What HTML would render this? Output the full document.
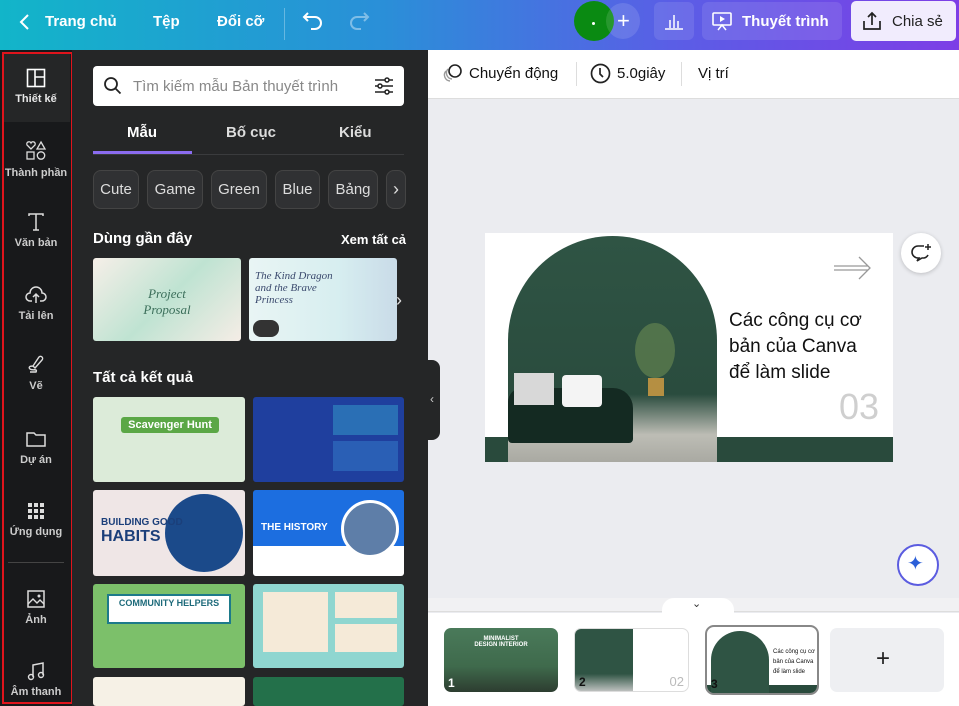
<!DOCTYPE html>
<html><head><meta charset="utf-8">
<style>
*{box-sizing:border-box;margin:0;padding:0}
body{width:959px;height:706px;overflow:hidden;font-family:"Liberation Sans",sans-serif;background:#ebecf0;position:relative}
.abs{position:absolute}
#top{left:0;top:0;width:959px;height:50px;background:linear-gradient(90deg,#12b5c9 0%,#2a8fd8 40%,#5a5ee6 70%,#7d3ee6 100%)}
.tt{color:#fff;font-weight:bold;font-size:15px;top:13px}
#side{left:0;top:50px;width:72px;height:656px;background:#18191b}
#panel{left:72px;top:50px;width:356px;height:656px;background:#252627}
.si{width:68px;left:2px;text-align:center;color:#e8e8e8;font-size:11px;font-weight:bold}
.si svg{display:block;margin:0 auto 5px}
.chip{top:170px;height:39px;border:1px solid #444;background:#303133;border-radius:8px;color:#ddd;font-size:15px;line-height:37px;text-align:center}
.th{border-radius:3px;overflow:hidden}
.wt{color:#fff;font-weight:bold;font-size:14px}
</style></head><body>
<div id="top" class="abs">
  <svg class="abs" style="left:18px;top:13px" width="14" height="18" viewBox="0 0 14 18"><path d="M10 2L3 9l7 7" stroke="#fff" stroke-width="2" fill="none"/></svg>
  <div class="abs tt" style="left:45px">Trang chủ</div>
  <div class="abs tt" style="left:153px">Tệp</div>
  <div class="abs tt" style="left:217px">Đổi cỡ</div>
  <div class="abs" style="left:284px;top:8px;width:1px;height:32px;background:rgba(255,255,255,.3)"></div>
  <svg class="abs" style="left:302px;top:10px" width="22" height="22" viewBox="0 0 22 22"><path d="M6 3L2 7l4 4M2 7h11a6 6 0 0 1 0 12H9" stroke="#fff" stroke-width="2" fill="none"/></svg>
  <svg class="abs" style="left:348px;top:10px" width="22" height="22" viewBox="0 0 22 22"><path d="M16 3l4 4-4 4M20 7H9a6 6 0 0 0 0 12h4" stroke="rgba(255,255,255,.4)" stroke-width="2" fill="none"/></svg>
  <div class="abs" style="left:574px;top:1px;width:40px;height:40px;border-radius:50%;background:#0a8a12"></div>
  <div class="abs" style="left:592px;top:22px;width:3px;height:3px;background:#fff;border-radius:50%"></div>
  <div class="abs" style="left:606px;top:3px;width:34px;height:36px;border-radius:50%;background:rgba(255,255,255,.12)"></div>
  <div class="abs" style="left:617px;top:8px;color:#fff;font-size:22px">+</div>
  <div class="abs" style="left:654px;top:2px;width:40px;height:38px;border-radius:6px;background:rgba(255,255,255,.1)"></div>
  <svg class="abs" style="left:664px;top:11px" width="20" height="20" viewBox="0 0 20 20"><path d="M1 18h18M6 17V9M10 17V4M14 17V10" stroke="#fff" stroke-width="1.5"/></svg>
  <div class="abs" style="left:702px;top:2px;width:140px;height:38px;border-radius:6px;background:rgba(255,255,255,.1)"></div>
  <svg class="abs" style="left:711px;top:10px" width="22" height="22" viewBox="0 0 22 22"><rect x="2" y="3" width="18" height="12" rx="1" stroke="#fff" stroke-width="1.6" fill="none"/><path d="M9 6v6l5-3z" fill="#fff"/><path d="M7 20l4-5 4 5" stroke="#fff" stroke-width="1.5" fill="none"/></svg>
  <div class="abs tt" style="left:742px">Thuyết trình</div>
  <div class="abs" style="left:851px;top:1px;width:105px;height:40px;border-radius:5px;background:#f1ecfd"></div>
  <svg class="abs" style="left:861px;top:10px" width="22" height="22" viewBox="0 0 22 22"><path d="M3 11v8h16v-8M11 15V3M7 7l4-4 4 4" stroke="#222" stroke-width="1.7" fill="none"/></svg>
  <div class="abs" style="left:892px;top:13px;color:#222;font-size:15px">Chia sẻ</div>
</div>

<div id="side" class="abs"></div>
<div class="abs" style="left:2px;top:52px;width:68px;height:70px;background:#252627"></div>
<div class="abs" style="left:2px;top:52px;width:71px;height:652px;border:2px solid #e0141c"></div>
<div class="abs si" style="top:68px"><svg width="20" height="20" viewBox="0 0 20 20"><rect x="1.5" y="1.5" width="17" height="17" stroke="#fff" stroke-width="1.6" fill="none"/><path d="M9 2v16M9 9h9" stroke="#fff" stroke-width="1.6"/></svg>Thiết kế</div>
<div class="abs si" style="top:140px;color:#ccc"><svg width="22" height="22" viewBox="0 0 22 22"><path d="M6 9L2 5a2 2 0 0 1 4-2 2 2 0 0 1 4 2z" stroke="#ddd" stroke-width="1.3" fill="none"/><path d="M16 2l4 7h-8z" stroke="#ddd" stroke-width="1.3" fill="none"/><rect x="2" y="12" width="7" height="7" stroke="#ddd" stroke-width="1.3" fill="none"/><circle cx="16" cy="15.5" r="3.7" stroke="#ddd" stroke-width="1.3" fill="none"/></svg>Thành phần</div>
<div class="abs si" style="top:212px;color:#ccc"><svg width="20" height="20" viewBox="0 0 20 20"><path d="M3 4V2h14v2M10 2v16M7 18h6" stroke="#ddd" stroke-width="1.5" fill="none"/></svg>Văn bản</div>
<div class="abs si" style="top:285px;color:#ccc"><svg width="22" height="20" viewBox="0 0 22 20"><path d="M7 16H5a4 4 0 0 1 0-8 6 6 0 0 1 12 0 4 4 0 0 1 0 8h-2M11 18V9M8 12l3-3 3 3" stroke="#ddd" stroke-width="1.5" fill="none"/></svg>Tải lên</div>
<div class="abs si" style="top:355px;color:#ccc"><svg width="20" height="20" viewBox="0 0 20 20"><path d="M9 13l7-8a2 2 0 0 0-3-3L7 11zM7 11c-3 0-5 1-3 3s8-1 6 3H4" stroke="#ddd" stroke-width="1.4" fill="none"/></svg>Vẽ</div>
<div class="abs si" style="top:429px;color:#ccc"><svg width="22" height="20" viewBox="0 0 22 20"><path d="M2 4h7l2 2h9v11H2z" stroke="#ddd" stroke-width="1.5" fill="none"/></svg>Dự án</div>
<div class="abs si" style="top:501px;color:#ccc"><svg width="20" height="20" viewBox="0 0 20 20" fill="#ddd"><rect x="2" y="2" width="4" height="4"/><rect x="8" y="2" width="4" height="4"/><rect x="14" y="2" width="4" height="4"/><rect x="2" y="8" width="4" height="4"/><rect x="8" y="8" width="4" height="4"/><rect x="14" y="8" width="4" height="4"/><rect x="2" y="14" width="4" height="4"/><rect x="8" y="14" width="4" height="4"/><rect x="14" y="14" width="4" height="4"/></svg>Ứng dụng</div>
<div class="abs" style="left:8px;top:562px;width:56px;height:1px;background:#444"></div>
<div class="abs si" style="top:589px;color:#ccc"><svg width="20" height="20" viewBox="0 0 20 20"><rect x="2" y="2" width="16" height="16" stroke="#ddd" stroke-width="1.5" fill="none"/><path d="M2 15l5-5 4 4 3-3 4 4" stroke="#ddd" stroke-width="1.4" fill="none"/><circle cx="13" cy="7" r="1.5" fill="#ddd"/></svg>Ảnh</div>
<div class="abs si" style="top:661px;color:#ccc"><svg width="20" height="20" viewBox="0 0 20 20"><path d="M7 16V4l10-2v12" stroke="#ddd" stroke-width="1.5" fill="none"/><circle cx="5" cy="16" r="2.5" stroke="#ddd" stroke-width="1.4" fill="none"/><circle cx="15" cy="14" r="2.5" stroke="#ddd" stroke-width="1.4" fill="none"/></svg>Âm thanh</div>

<div id="panel" class="abs"></div>
<div class="abs" style="left:93px;top:66px;width:311px;height:40px;background:#fff;border-radius:4px"></div>
<svg class="abs" style="left:103px;top:76px" width="20" height="20" viewBox="0 0 20 20"><circle cx="8" cy="8" r="6" stroke="#222" stroke-width="1.8" fill="none"/><path d="M12.5 12.5l5 5" stroke="#222" stroke-width="1.8"/></svg>
<div class="abs" style="left:133px;top:78px;color:#888;font-size:15px">Tìm kiếm mẫu Bản thuyết trình</div>
<svg class="abs" style="left:373px;top:75px" width="22" height="22" viewBox="0 0 22 22" stroke="#222" stroke-width="1.5" fill="none"><path d="M2 5h18M2 11h18M2 17h18"/><circle cx="14" cy="5" r="2" fill="#fff"/><circle cx="7" cy="11" r="2" fill="#fff"/><circle cx="14" cy="17" r="2" fill="#fff"/></svg>
<div class="abs wt" style="left:127px;top:124px;font-size:15px">Mẫu</div>
<div class="abs" style="left:226px;top:124px;color:#ddd;font-weight:bold;font-size:15px">Bố cục</div>
<div class="abs" style="left:339px;top:124px;color:#ddd;font-weight:bold;font-size:15px">Kiểu</div>
<div class="abs" style="left:93px;top:151px;width:99px;height:3px;background:#8b6cf0"></div>
<div class="abs" style="left:93px;top:154px;width:311px;height:1px;background:#3a3b3d"></div>
<div class="abs chip" style="left:93px;width:46px">Cute</div>
<div class="abs chip" style="left:147px;width:56px">Game</div>
<div class="abs chip" style="left:211px;width:56px">Green</div>
<div class="abs chip" style="left:275px;width:45px">Blue</div>
<div class="abs chip" style="left:328px;width:50px">Bảng</div>
<div class="abs chip" style="left:386px;width:20px;font-size:18px">›</div>
<div class="abs wt" style="left:93px;top:230px;font-size:15px">Dùng gần đây</div>
<div class="abs wt" style="left:341px;top:232px;font-size:13px">Xem tất cả</div>
<div class="abs th" style="left:93px;top:258px;width:148px;height:83px;background:linear-gradient(135deg,#f6efe8,#bfe3d2 50%,#f5ede6)"><div style="color:#3b6e5a;font-family:'Liberation Serif';font-style:italic;font-size:13px;text-align:center;margin-top:28px">Project<br>Proposal</div></div>
<div class="abs th" style="left:249px;top:258px;width:148px;height:83px;background:linear-gradient(90deg,#e9f5f4,#d7eef0 60%,#c9dbe8)"><div style="color:#3b4a6e;font-family:'Liberation Serif';font-style:italic;font-size:11px;margin:12px 0 0 6px;width:80px">The Kind Dragon and the Brave Princess</div><div style="position:absolute;left:4px;top:62px;width:26px;height:17px;border-radius:8px;background:#333"></div></div>
<div class="abs" style="left:396px;top:290px;color:#ddd;font-size:18px">›</div>
<div class="abs wt" style="left:93px;top:369px;font-size:15px">Tất cả kết quả</div>
<div class="abs th" style="left:93px;top:397px;width:152px;height:85px;background:#dcebd9"><div style="margin:20px 0 0 28px;width:98px;height:16px;background:#5ba746;border-radius:3px;color:#fff;font-size:11px;font-weight:bold;text-align:center;line-height:16px">Scavenger Hunt</div></div>
<div class="abs th" style="left:253px;top:397px;width:151px;height:85px;background:#1f3f9e"><div style="position:absolute;left:80px;top:8px;width:65px;height:30px;background:#2a6fb5"></div><div style="position:absolute;left:80px;top:44px;width:65px;height:30px;background:#2a5fb5"></div></div>
<div class="abs th" style="left:93px;top:490px;width:152px;height:86px;background:#efe6e6"><div style="position:absolute;left:72px;top:4px;width:78px;height:78px;border-radius:50%;background:#1b4a8a"></div><div style="position:absolute;left:8px;top:26px;color:#1b3f7a;font-weight:bold;font-size:10px;line-height:14px">BUILDING GOOD<br><span style="font-size:16px">HABITS</span></div></div>
<div class="abs th" style="left:253px;top:490px;width:151px;height:86px;background:linear-gradient(180deg,#1c6ee0 0,#1c6ee0 65%,#fff 65%)"><div style="position:absolute;left:8px;top:32px;color:#fff;font-weight:bold;font-size:10px">THE HISTORY</div><div style="position:absolute;left:88px;top:10px;width:58px;height:58px;border-radius:50%;background:#5e7ea8;border:3px solid #fff"></div></div>
<div class="abs th" style="left:93px;top:584px;width:152px;height:84px;background:#7cc06a"><div style="margin:10px 0 0 14px;width:124px;height:30px;background:#fff;border:2px solid #1d7a8a;color:#1d6a7a;font-size:9px;font-weight:bold;text-align:center;line-height:14px">COMMUNITY HELPERS</div></div>
<div class="abs th" style="left:253px;top:584px;width:151px;height:84px;background:#8fd6d0"><div style="position:absolute;left:10px;top:8px;width:65px;height:60px;background:#f5ead8"></div><div style="position:absolute;left:82px;top:8px;width:62px;height:26px;background:#f5ead8"></div><div style="position:absolute;left:82px;top:40px;width:62px;height:28px;background:#f5ead8"></div></div>
<div class="abs th" style="left:93px;top:677px;width:152px;height:29px;background:#f6f1e6"></div>
<div class="abs th" style="left:253px;top:677px;width:151px;height:29px;background:#23704a"></div>
<div class="abs" style="left:428px;top:360px;width:12px;height:80px;background:#252627;border-radius:0 8px 8px 0"></div>
<div class="abs" style="left:430px;top:392px;color:#ccc;font-size:12px">‹</div>

<div class="abs" style="left:428px;top:50px;width:531px;height:49px;background:#fff;border-bottom:1px solid #ddd"></div>
<svg class="abs" style="left:442px;top:63px" width="22" height="20" viewBox="0 0 22 20"><circle cx="13" cy="8" r="6" stroke="#222" stroke-width="1.6" fill="none"/><path d="M6 6a6 6 0 0 0 4 10M4 8a6 6 0 0 0 4 10" stroke="#999" stroke-width="1.4" fill="none"/></svg>
<div class="abs" style="left:469px;top:65px;font-size:15px;color:#111">Chuyển động</div>
<div class="abs" style="left:576px;top:62px;width:1px;height:24px;background:#ddd"></div>
<svg class="abs" style="left:590px;top:63px" width="21" height="21" viewBox="0 0 21 21"><circle cx="10.5" cy="10.5" r="9" stroke="#222" stroke-width="1.7" fill="none"/><path d="M10 5v6l3 3" stroke="#222" stroke-width="1.7" fill="none"/></svg>
<div class="abs" style="left:617px;top:65px;font-size:15px;color:#111">5.0giây</div>
<div class="abs" style="left:681px;top:62px;width:1px;height:24px;background:#ddd"></div>
<div class="abs" style="left:698px;top:65px;font-size:15px;color:#111">Vị trí</div>

<div class="abs" style="left:485px;top:233px;width:408px;height:229px;background:#fff;overflow:hidden">
  <div class="abs" style="left:0;top:204px;width:408px;height:25px;background:#294a3c"></div>
  <div class="abs" style="left:23px;top:3px;width:209px;height:226px;border-radius:105px 105px 0 0;background:linear-gradient(180deg,#2f5444,#2a4c3e 70%,#bdbdb5 88%,#a9a9a2)"></div>
  <div class="abs" style="left:23px;top:155px;width:125px;height:55px;background:#142a22;border-radius:14px 20px 4px 4px"></div>
  <div class="abs" style="left:29px;top:140px;width:40px;height:32px;background:#d8d8d8"></div>
  <div class="abs" style="left:77px;top:142px;width:40px;height:32px;background:#f4f4f4;border-radius:4px"></div>
  <div class="abs" style="left:163px;top:145px;width:16px;height:18px;background:#b58f42"></div>
  <div class="abs" style="left:150px;top:90px;width:40px;height:55px;border-radius:50%;background:#5b7c4e;opacity:.8"></div>
  <div class="abs" style="left:244px;top:75px;font-size:19px;line-height:26px;color:#111">Các công cụ cơ<br>bản của Canva<br>để làm slide</div>
  <div class="abs" style="left:354px;top:153px;font-size:36px;color:#cfcfcf">03</div>
  <svg class="abs" style="left:348px;top:22px" width="40" height="26" viewBox="0 0 40 26"><path d="M1 11h34M1 15h34M26 2l11 11-11 11" stroke="#999" stroke-width="1.3" fill="none"/></svg>
</div>
<div class="abs" style="left:901px;top:233px;width:40px;height:40px;border-radius:50%;background:#fff;box-shadow:0 1px 4px rgba(0,0,0,.2)"></div>
<svg class="abs" style="left:910px;top:242px" width="22" height="22" viewBox="0 0 22 22"><path d="M14 4H8a6 6 0 0 0 0 12h1l-2 3 5-3h2a6 6 0 0 0 4-3" stroke="#222" stroke-width="1.6" fill="none"/><path d="M18 2v6M15 5h6" stroke="#222" stroke-width="1.5"/></svg>
<div class="abs" style="left:897px;top:544px;width:42px;height:42px;border-radius:50%;background:#fff;border:2px solid #5b5ce0"></div>
<div class="abs" style="left:907px;top:551px;color:#2b5fd8;font-size:20px">✦</div>

<div class="abs" style="left:428px;top:598px;width:531px;height:14px;background:#f1f1f3;border-bottom:1px solid #ddd"></div>
<div class="abs" style="left:662px;top:598px;width:72px;height:15px;background:#fff;border-radius:12px 12px 0 0"></div>
<div class="abs" style="left:692px;top:597px;font-size:11px;color:#333">⌄</div>
<div class="abs" style="left:428px;top:613px;width:531px;height:93px;background:#fff"></div>
<div class="abs" style="left:444px;top:628px;width:114px;height:64px;border-radius:7px;background:linear-gradient(180deg,#4a7a5a,#3f6a4c 60%,#2d3d30)"><div style="color:#fff;font-size:6px;text-align:center;margin-top:8px;font-weight:bold">MINIMALIST<br>DESIGN INTERIOR</div><div style="position:absolute;left:4px;bottom:2px;color:#fff;font-weight:bold;font-size:12px">1</div></div>
<div class="abs" style="left:574px;top:628px;width:115px;height:64px;border-radius:7px;background:#fff;border:1px solid #ddd;overflow:hidden"><div style="position:absolute;left:0;top:0;width:58px;height:64px;background:linear-gradient(180deg,#2f5444 70%,#ccc)"></div><div style="position:absolute;left:4px;bottom:2px;color:#111;font-weight:bold;font-size:12px">2</div><div style="position:absolute;right:4px;bottom:2px;color:#bbb;font-size:13px">02</div></div>
<div class="abs" style="left:705px;top:625px;width:114px;height:70px;border-radius:9px;border:2px solid #888;background:#fff;overflow:hidden"><div style="position:absolute;left:0;bottom:0;width:110px;height:8px;background:#294a3c"></div><div style="position:absolute;left:4px;top:4px;width:58px;height:62px;border-radius:29px 29px 0 0;background:#2f5444"></div><div style="position:absolute;left:66px;top:20px;font-size:6px;line-height:10px;color:#111;white-space:nowrap">Các công cụ cơ<br>bản của Canva<br>để làm slide</div><div style="position:absolute;left:4px;bottom:2px;color:#111;font-weight:bold;font-size:12px">3</div></div>
<div class="abs" style="left:830px;top:628px;width:114px;height:64px;border-radius:7px;background:#eeeff2"></div>
<div class="abs" style="left:876px;top:645px;font-size:24px;color:#222">+</div>
</body></html>
